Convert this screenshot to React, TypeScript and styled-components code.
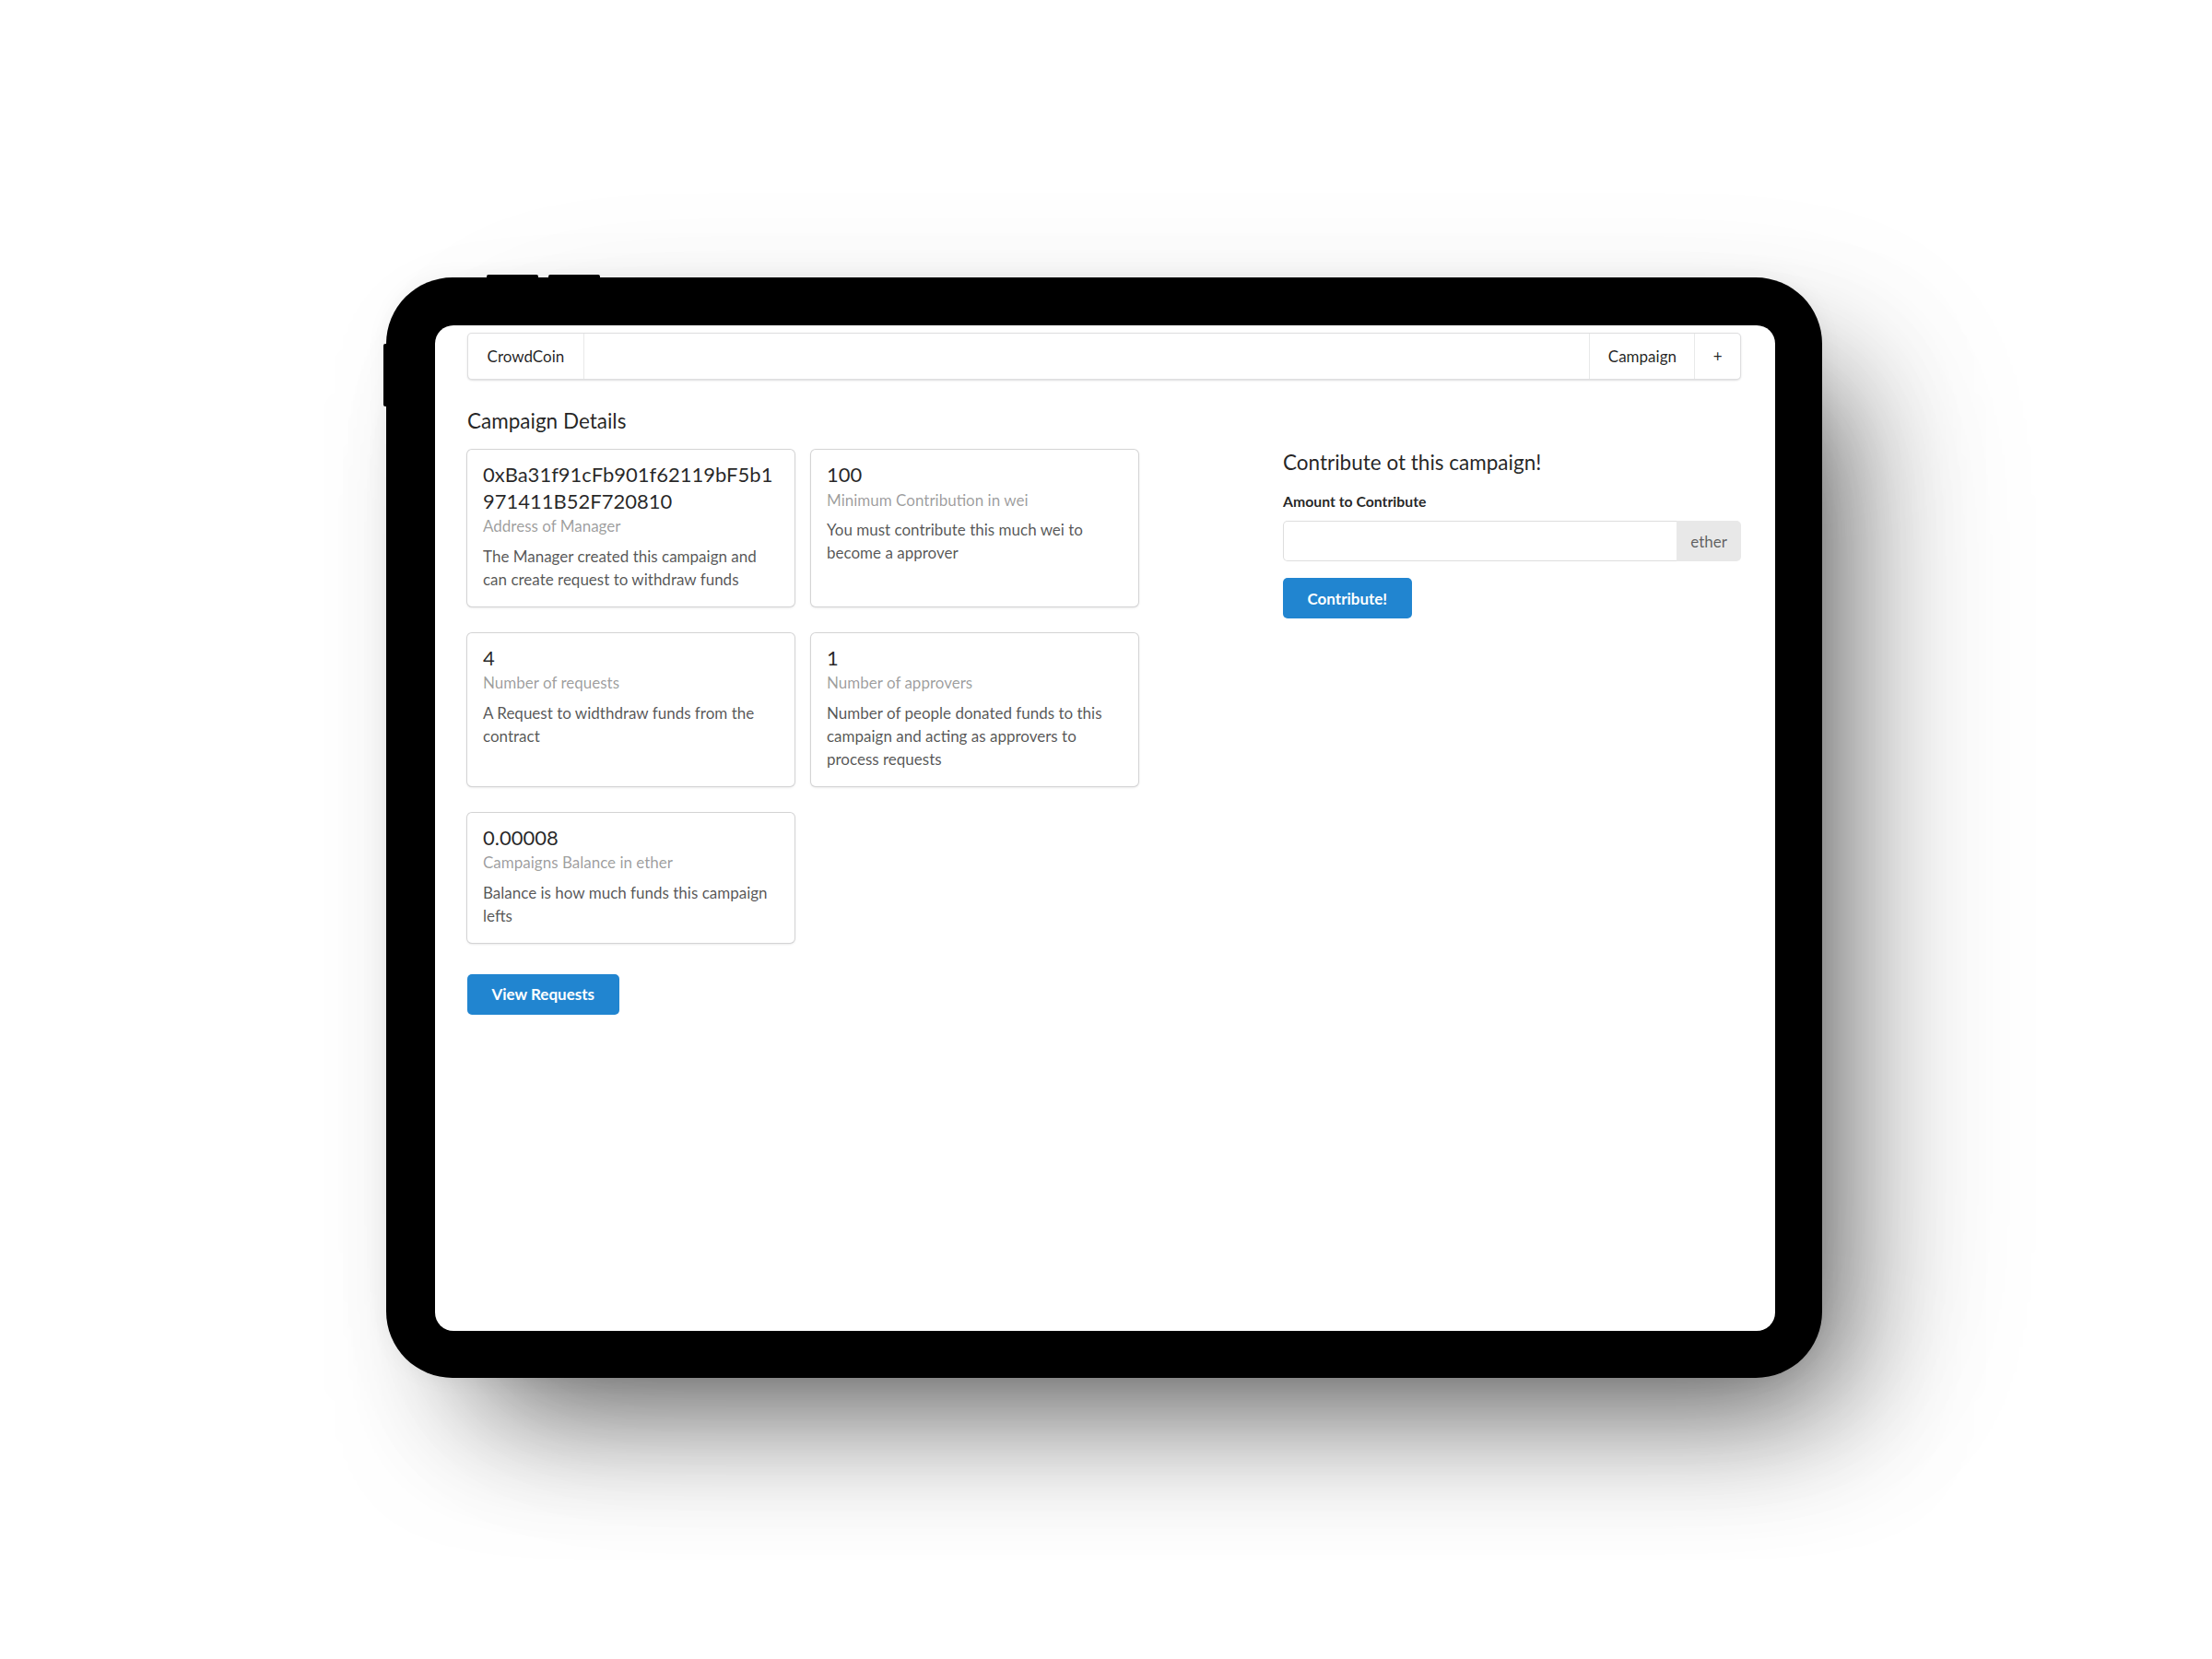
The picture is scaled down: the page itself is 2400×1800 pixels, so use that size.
import React from 'react';
import styled, { createGlobalStyle } from 'styled-components';

type CardData = {
   header: string
   meta: string
   description: string
}

const cards: CardData[] = [
   {
      header: '0xBa31f91cFb901f62119bF5b1971411B52F720810',
      meta: 'Address of Manager',
      description: 'The Manager created this campaign and can create request to withdraw funds',
   },
   {
      header: '100',
      meta: 'Minimum Contribution in wei',
      description: 'You must contribute this much wei to become a approver',
   },
   {
      header: '4',
      meta: 'Number of requests',
      description: 'A Request to widthdraw funds from the contract',
   },
   {
      header: '1',
      meta: 'Number of approvers',
      description: 'Number of people donated funds to this campaign and acting as approvers to process requests',
   },
   {
      header: '0.00008',
      meta: 'Campaigns Balance in ether',
      description: 'Balance is how much funds this campaign lefts',
   },
];

const InfoCard = (props: CardData) => {
   return (
      <Card>
         <CardHeader>{props.header}</CardHeader>
         <CardMeta>{props.meta}</CardMeta>
         <CardDescription>{props.description}</CardDescription>
      </Card>
   );
};

export default function App() {
   return (
      <>
         <GlobalStyle/>
         <Page>
            <Tablet>
               <TopKey $at={109}/>
               <TopKey $at={176}/>
               <SideKey $at={72}/>
               <Screen>
                  <Menu>
                     <MenuItem>CrowdCoin</MenuItem>
                     <Spacer/>
                     <MenuItem $right>Campaign</MenuItem>
                     <MenuItem $right>+</MenuItem>
                  </Menu>
                  <Title>Campaign Details</Title>
                  <Grid>
                     <div>
                        <Cards>
                           {cards.map((c) => <InfoCard key={c.meta} {...c}/>)}
                        </Cards>
                        <Button $top={34}>View Requests</Button>
                     </div>
                     <Form>
                        <FormTitle>Contribute ot this campaign!</FormTitle>
                        <Label>Amount to Contribute</Label>
                        <InputGroup>
                           <Input/>
                           <Unit>ether</Unit>
                        </InputGroup>
                        <Button $top={18}>Contribute!</Button>
                     </Form>
                  </Grid>
               </Screen>
            </Tablet>
         </Page>
      </>
   );
}

const GlobalStyle = createGlobalStyle`
    html, body {
        margin: 0;
        background: #ffffff;
    }
    body {
        font-family: Lato, "Helvetica Neue", Arial, sans-serif;
        font-size: 17px;
        color: rgba(0, 0, 0, .87);
    }
    * {
        box-sizing: border-box;
    }
`

const Page = styled.div`
    width: 2400px;
    height: 1800px;
    padding: 301px 0 0 419px;
    overflow: hidden;
`

const Tablet = styled.div`
    position: relative;
    width: 1558px;
    height: 1194px;
    padding: 52px 51px 51px 53px;
    background: #000;
    border-radius: 72px;
    box-shadow: 0 0 24px rgba(0, 0, 0, .05),
                55px 75px 140px -45px rgba(0, 0, 0, .62),
                90px 50px 200px -40px rgba(0, 0, 0, .14);
`

const TopKey = styled.span<{ $at: number }>`
    position: absolute;
    top: -3px;
    left: ${p => p.$at}px;
    width: 56px;
    height: 5px;
    background: #000;
    border-radius: 2px 2px 0 0;
`

const SideKey = styled.span<{ $at: number }>`
    position: absolute;
    left: -3px;
    top: ${p => p.$at}px;
    width: 5px;
    height: 68px;
    background: #000;
    border-radius: 2px 0 0 2px;
`

const Screen = styled.div`
    height: 100%;
    padding: 8px 37px 0 35px;
    background: #fff;
    border-radius: 20px;
    overflow: hidden;
`

const Menu = styled.div`
    display: flex;
    height: 51px;
    background: #fff;
    border: 1px solid rgba(34, 36, 38, .15);
    border-radius: 5px;
    box-shadow: 0 1px 2px 0 rgba(34, 36, 38, .15);
`

const MenuItem = styled.div<{ $right?: boolean }>`
    display: flex;
    align-items: center;
    padding: 0 ${p => p.$right ? 19.4 : 20.6}px;
    font-size: 17px;
    line-height: 1;
    color: rgba(0, 0, 0, .87);
    border-${p => p.$right ? 'left' : 'right'}: 1px solid rgba(34, 36, 38, .1);
`

const Spacer = styled.div`
    flex: 1;
`

const Title = styled.h3`
    margin: 31px 0 17px;
    font-size: 22.5px;
    line-height: 28px;
    font-weight: 400;
    color: rgba(0, 0, 0, .87);
`

const Grid = styled.div`
    display: grid;
    grid-template-columns: 851px 1fr;
    column-gap: 34px;
    align-items: start;
`

const Cards = styled.div`
    display: flex;
    flex-wrap: wrap;
    gap: 29px 18px;
`

const Card = styled.div`
    width: 355px;
    padding: 17px;
    background: #fff;
    border-radius: 5px;
    box-shadow: 0 1px 3px 0 #d4d4d5, 0 0 0 1px #d4d4d5;
`

const CardHeader = styled.div`
    margin-top: -4px;
    font-size: 22px;
    line-height: 28.5px;
    color: rgba(0, 0, 0, .85);
    word-break: break-all;
`

const CardMeta = styled.div`
    font-size: 17px;
    line-height: 25px;
    color: rgba(0, 0, 0, .4);
`

const CardDescription = styled.div`
    margin-top: 7.5px;
    font-size: 17px;
    line-height: 25px;
    color: rgba(0, 0, 0, .68);
`

const Button = styled.button<{ $top: number }>`
    display: block;
    margin-top: ${p => p.$top}px;
    height: 44px;
    padding: 0 26.5px;
    border: none;
    border-radius: 5px;
    background: #2185d0;
    color: #fff;
    font-family: Lato, "Helvetica Neue", Arial, sans-serif;
    font-size: 17px;
    font-weight: 700;
    line-height: 1;
`

const Form = styled.div`
    display: flex;
    flex-direction: column;
    align-items: flex-start;
`

const FormTitle = styled.h3`
    margin: 0 0 17px;
    font-size: 22.5px;
    line-height: 28px;
    font-weight: 400;
    color: rgba(0, 0, 0, .87);
`

const Label = styled.label`
    display: block;
    margin-bottom: 10px;
    font-size: 15.8px;
    line-height: 22px;
    font-weight: 700;
    color: rgba(0, 0, 0, .87);
`

const InputGroup = styled.div`
    display: flex;
    width: 100%;
    height: 44px;
`

const Input = styled.input`
    flex: 1;
    min-width: 0;
    padding: 0 17px;
    border: 1px solid rgba(34, 36, 38, .15);
    border-right: none;
    border-radius: 5px 0 0 5px;
    font-family: Lato, "Helvetica Neue", Arial, sans-serif;
    font-size: 17px;
    outline: none;
`

const Unit = styled.div`
    display: flex;
    align-items: center;
    padding: 0 15px;
    background: #e8e8e8;
    border-radius: 0 5px 5px 0;
    font-size: 17px;
    color: rgba(0, 0, 0, .6);
`
